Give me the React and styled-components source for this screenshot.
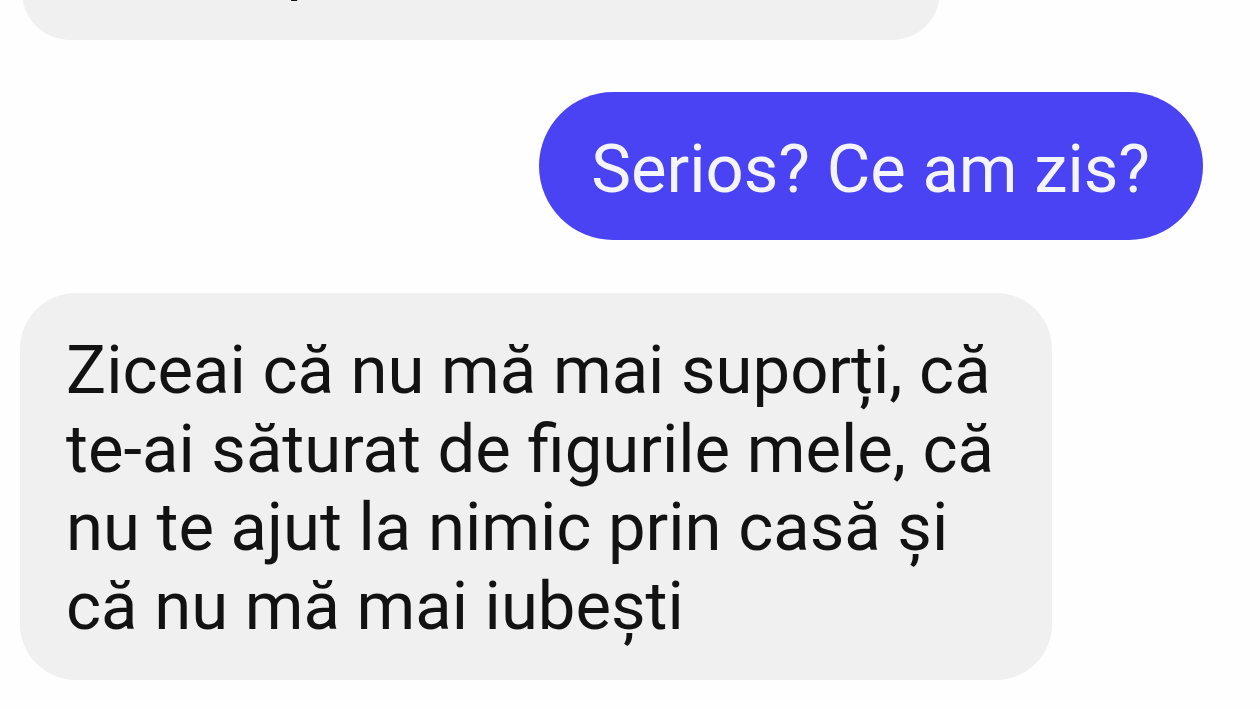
import React from "react";
import styled, { createGlobalStyle } from "styled-components";

const Global = createGlobalStyle`
  html, body { margin: 0; padding: 0; background: #ffffff; }
  body { font-family: Roboto, "Noto Sans", "Liberation Sans", sans-serif; }
`;

const Page = styled.div`
  width: 1260px;
  height: 709px;
  overflow: hidden;
  display: flex;
  flex-direction: column;
  padding: 0 57px 0 20px;
  box-sizing: border-box;
  background: #fefefe;
`;

const Bubble = styled.div`
  box-sizing: border-box;
  align-self: ${(p) => (p.$mine ? "flex-end" : "flex-start")};
  background: ${(p) => (p.$mine ? "#4a43f4" : "#f0f0f0")};
  color: ${(p) => (p.$mine ? "#f4f4fb" : "#121212")};
  font-size: 67px;
  letter-spacing: 0;
  white-space: nowrap;
`;

const TopBubble = styled(Bubble)`
  width: 918px;
  height: 140px;
  margin-top: -100px;
  margin-left: 2px;
  border-radius: 48px;
  padding: 25px 46px 0 46px;
  line-height: 78px;
  overflow: hidden;
`;

const SentBubble = styled(Bubble)`
  margin-top: 52px;
  height: 148px;
  border-radius: 74px;
  padding: 6px 53px 0 52px;
  display: flex;
  align-items: center;
  line-height: 1;
`;

const ReceivedBubble = styled(Bubble)`
  margin-top: 53px;
  width: 1032px;
  height: 387px;
  border-radius: 56px;
  padding: 38px 46px 0 46px;
  line-height: 78.5px;
`;

const Line = styled.div`
  display: block;
`;

export default function App() {
  return (
    <>
      <Global />
      <Page>
        <TopBubble>Nu, ai spus că nu mai vrei să vorbim</TopBubble>
        <SentBubble $mine>Serios? Ce am zis?</SentBubble>
        <ReceivedBubble>
          <Line>Ziceai că nu mă mai suporți, că</Line>
          <Line>te-ai săturat de figurile mele, că</Line>
          <Line>nu te ajut la nimic prin casă și</Line>
          <Line>că nu mă mai iubești</Line>
        </ReceivedBubble>
      </Page>
    </>
  );
}
